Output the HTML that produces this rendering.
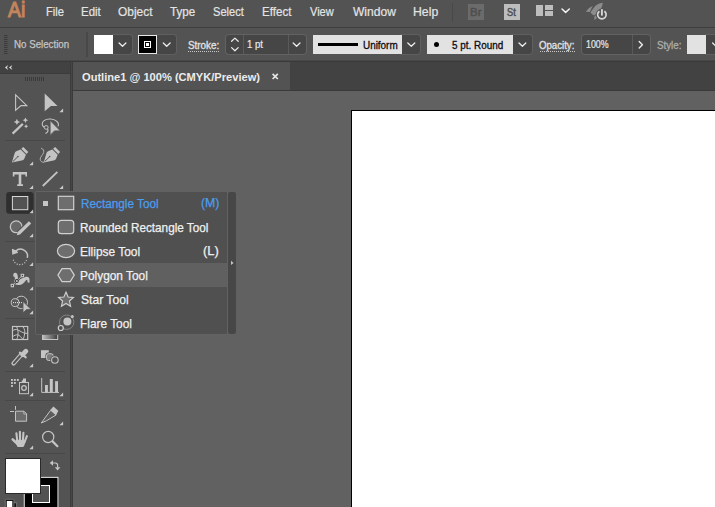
<!DOCTYPE html><html><head><meta charset="utf-8"><title>Ai</title><style>
html,body{margin:0;padding:0;}
body{width:715px;height:507px;overflow:hidden;background:#535353;position:relative;font-family:"Liberation Sans",sans-serif;}
.a{position:absolute;}
.t{position:absolute;white-space:nowrap;transform-origin:0 0;line-height:1;}
svg{position:absolute;overflow:visible;}
</style></head><body>
<div class="a" style="left:0px;top:0px;width:715px;height:27px;background:#535353;"></div>
<div class="a" style="left:0px;top:27px;width:715px;height:1px;background:#3e3e3e;"></div>
<div class="a" style="left:0px;top:28px;width:715px;height:33px;background:#535353;"></div>
<div class="a" style="left:0px;top:60px;width:715px;height:1px;background:#484848;"></div>
<div class="a" style="left:0px;top:61px;width:715px;height:1px;background:#3a3a3a;"></div>
<div class="a" style="left:0px;top:62px;width:70px;height:11px;background:#424242;"></div>
<div class="a" style="left:0px;top:73px;width:70px;height:1px;background:#3c3c3c;"></div>
<div class="a" style="left:0px;top:74px;width:70px;height:433px;background:#535353;"></div>
<div class="a" style="left:70px;top:62px;width:3px;height:445px;background:#3b3b3b;"></div>
<div class="a" style="left:71px;top:62px;width:1px;height:445px;background:#474747;"></div>
<div class="a" style="left:73px;top:62px;width:642px;height:28px;background:#424242;"></div>
<div class="a" style="left:73px;top:62px;width:216.5px;height:28px;background:#535353;"></div>
<div class="a" style="left:73px;top:90px;width:642px;height:1px;background:#3a3a3a;"></div>
<div class="a" style="left:73px;top:91px;width:642px;height:416px;background:#616161;"></div>
<div class="a" style="left:351px;top:110px;width:364px;height:397px;background:#000;"></div>
<div class="a" style="left:352px;top:111px;width:363px;height:396px;background:#fff;"></div>
<div class="a" style="left:451.8px;top:2.5px;width:1.4px;height:19px;background:#484848;"></div>
<div class="a" style="left:468px;top:4px;width:16px;height:16px;background:#6b6b6b;"></div>
<div class="a" style="left:504px;top:4px;width:16px;height:16px;background:#bdbdbd;"></div>
<div class="a" style="left:536px;top:5px;width:7px;height:11px;background:#bdbdbd;"></div>
<div class="a" style="left:545px;top:5px;width:8px;height:5px;background:#bdbdbd;"></div>
<div class="a" style="left:545px;top:11px;width:8px;height:5px;background:#bdbdbd;"></div>
<div class="a" style="left:86.3px;top:32px;width:1.4px;height:25px;background:#484848;"></div>
<div class="a" style="left:113px;top:35px;width:18.5px;height:19px;background:#464646;border-radius:0 3px 3px 0;box-shadow:0 0 0 1px rgba(255,255,255,0.07);"></div>
<div class="a" style="left:94px;top:35px;width:19.2px;height:19px;background:#fff;"></div>
<div class="a" style="left:157px;top:35px;width:18.5px;height:19px;background:#464646;border-radius:0 3px 3px 0;box-shadow:0 0 0 1px rgba(255,255,255,0.07);"></div>
<div class="a" style="left:138px;top:35px;width:19px;height:19px;background:#000;box-shadow:inset 0 0 0 1px #e8e8e8;"></div>
<div class="a" style="left:144px;top:41px;width:7px;height:7px;background:#000;box-shadow:inset 0 0 0 1px #fff;"></div>
<div class="a" style="left:146px;top:43px;width:3px;height:3px;background:#fff;"></div>
<div class="a" style="left:226px;top:35px;width:80px;height:19px;background:#464646;border-radius:3px;box-shadow:0 0 0 1px rgba(255,255,255,0.09);"></div>
<div class="a" style="left:243px;top:35px;width:1px;height:19px;background:#5a5a5a;"></div>
<div class="a" style="left:288px;top:35px;width:1px;height:19px;background:#5a5a5a;"></div>
<div class="a" style="left:401px;top:35px;width:19px;height:19px;background:#464646;border-radius:0 3px 3px 0;box-shadow:0 0 0 1px rgba(255,255,255,0.07);"></div>
<div class="a" style="left:313px;top:35px;width:89px;height:19px;background:#e2e2e2;"></div>
<div class="a" style="left:318px;top:43px;width:40px;height:3px;background:#000;"></div>
<div class="a" style="left:512px;top:35px;width:19.5px;height:19px;background:#464646;border-radius:0 3px 3px 0;box-shadow:0 0 0 1px rgba(255,255,255,0.07);"></div>
<div class="a" style="left:427px;top:35px;width:86px;height:19px;background:#e2e2e2;"></div>
<div class="a" style="left:434px;top:42px;width:5px;height:5px;background:#000;border-radius:50%;"></div>
<div class="a" style="left:582.3px;top:35px;width:67.6px;height:19px;background:#464646;border-radius:3px;box-shadow:0 0 0 1px rgba(255,255,255,0.09);"></div>
<div class="a" style="left:632px;top:35px;width:1px;height:19px;background:#5a5a5a;"></div>
<div class="a" style="left:706px;top:35px;width:12px;height:19px;background:#464646;box-shadow:0 0 0 1px rgba(255,255,255,0.07);"></div>
<div class="a" style="left:687px;top:35px;width:19px;height:19px;background:#e2e2e2;"></div>
<svg width="715" height="507" viewBox="0 0 715 507" style="left:0;top:0">
<path d="M119.10 43.00L122.50 46.30L125.90 43.00" fill="none" stroke="#ececec" stroke-width="1.3" stroke-linecap="round" stroke-linejoin="round"/>
<path d="M163.30 43.00L166.70 46.30L170.10 43.00" fill="none" stroke="#ececec" stroke-width="1.3" stroke-linecap="round" stroke-linejoin="round"/>
<path d="M293.20 43.00L296.60 46.30L300.00 43.00" fill="none" stroke="#ececec" stroke-width="1.3" stroke-linecap="round" stroke-linejoin="round"/>
<path d="M407.80 43.00L411.30 46.30L414.80 43.00" fill="none" stroke="#ececec" stroke-width="1.3" stroke-linecap="round" stroke-linejoin="round"/>
<path d="M519.00 43.00L522.40 46.30L525.80 43.00" fill="none" stroke="#ececec" stroke-width="1.3" stroke-linecap="round" stroke-linejoin="round"/>
<path d="M712.60 43.00L716.00 46.30L719.40 43.00" fill="none" stroke="#ececec" stroke-width="1.3" stroke-linecap="round" stroke-linejoin="round"/>
<path d="M231.60 41.30L234.90 38.10L238.20 41.30" fill="none" stroke="#ececec" stroke-width="1.25" stroke-linecap="round" stroke-linejoin="round"/>
<path d="M231.60 47.60L234.90 50.80L238.20 47.60" fill="none" stroke="#ececec" stroke-width="1.25" stroke-linecap="round" stroke-linejoin="round"/>
<path d="M639.2 41.5L642.4 44.7L639.2 47.9" fill="none" stroke="#ececec" stroke-width="1.4" stroke-linecap="round" stroke-linejoin="round"/>
<path d="M562.00 9.00L565.65 12.40L569.30 9.00" fill="none" stroke="#f2f2f2" stroke-width="1.5" stroke-linecap="round" stroke-linejoin="round"/>
<rect x="4" y="35" width="3.5" height="1" fill="#3a3a3a"/>
<rect x="4" y="37" width="3.5" height="1" fill="#3a3a3a"/>
<rect x="4" y="39" width="3.5" height="1" fill="#3a3a3a"/>
<rect x="4" y="41" width="3.5" height="1" fill="#3a3a3a"/>
<rect x="4" y="43" width="3.5" height="1" fill="#3a3a3a"/>
<rect x="4" y="45" width="3.5" height="1" fill="#3a3a3a"/>
<rect x="4" y="47" width="3.5" height="1" fill="#3a3a3a"/>
<rect x="4" y="49" width="3.5" height="1" fill="#3a3a3a"/>
<rect x="4" y="51" width="3.5" height="1" fill="#3a3a3a"/>
<rect x="4" y="53" width="3.5" height="1" fill="#3a3a3a"/>
<rect x="25" y="77" width="1" height="4" fill="#3a3a3a"/>
<rect x="27" y="77" width="1" height="4" fill="#3a3a3a"/>
<rect x="29" y="77" width="1" height="4" fill="#3a3a3a"/>
<rect x="31" y="77" width="1" height="4" fill="#3a3a3a"/>
<rect x="33" y="77" width="1" height="4" fill="#3a3a3a"/>
<rect x="35" y="77" width="1" height="4" fill="#3a3a3a"/>
<rect x="37" y="77" width="1" height="4" fill="#3a3a3a"/>
<rect x="39" y="77" width="1" height="4" fill="#3a3a3a"/>
<rect x="41" y="77" width="1" height="4" fill="#3a3a3a"/>
<rect x="43" y="77" width="1" height="4" fill="#3a3a3a"/>
<path d="M8.2 65.1L4.9 67.5L8.2 69.9L7 67.5ZM12.3 65.1L9 67.5L12.3 69.9L11.1 67.5Z" fill="#dcdcdc"/>
<path d="M188 51.5H219" stroke="#c8c8c8" stroke-width="1" stroke-dasharray="1 1"/>
<path d="M540 51.5H575" stroke="#c8c8c8" stroke-width="1" stroke-dasharray="1 1"/>
<path d="M272.6 73.8L277.8 79M277.8 73.8L272.6 79" stroke="#e4e4e4" stroke-width="1.7"/>
<path d="M602.8 2.8C599 3.2 596 5 594.4 7C592.6 9.4 591 11.4 590.6 12.4C591.4 13.8 592.8 14.8 594.2 15.2L598 13C600.6 10 602.6 6 602.8 2.8Z" fill="#8c8c8c"/>
<path d="M592.8 5.9C590 6.8 587.4 9.2 585.9 11.8L589.9 12C590.6 10 591.6 7.8 592.8 5.9Z" fill="#8c8c8c"/>
<path d="M594.6 15.8L594.2 20C595.4 19.4 596.4 18.8 597 18L596 15.4Z" fill="#8c8c8c"/>
<circle cx="601.9" cy="14.7" r="6.1" fill="#535353"/>
<path d="M599.46 11.22A4.25 4.25 0 1 0 604.34 11.22" fill="none" stroke="#d6d6d6" stroke-width="1.7"/>
<path d="M601.9 9.2V15.6" stroke="#d6d6d6" stroke-width="1.9"/>
<rect x="5" y="140" width="60" height="1" fill="#484848"/>
<rect x="5" y="241" width="30" height="1" fill="#484848"/>
<rect x="5" y="318" width="30" height="1" fill="#484848"/>
<rect x="5" y="371" width="60" height="1" fill="#484848"/>
<rect x="5" y="400" width="60" height="1" fill="#484848"/>
<rect x="5" y="453" width="60" height="1" fill="#484848"/>
<path d="M15.6 94.8V110.2L21 105.6H26.8Z" fill="none" stroke="#c4c4c4" stroke-width="1.1" stroke-linejoin="miter"/>
<path d="M44.7 93.6V111.2L50.9 105.9H57.5Z" fill="#c4c4c4"/>
<path d="M63.1 108.6V112.3H59.4Z" fill="#cacaca"/>
<path d="M12.6 133.6L22.8 123.9" stroke="#c4c4c4" stroke-width="2.2"/>
<path d="M16.9 118.7L17.9 120.9L20.099999999999998 121.9L17.9 122.9L16.9 125.10000000000001L15.899999999999999 122.9L13.7 121.9L15.899999999999999 120.9Z" fill="#c4c4c4"/>
<path d="M25.4 117.5L26.25 119.35000000000001L28.099999999999998 120.2L26.25 121.05L25.4 122.9L24.549999999999997 121.05L22.7 120.2L24.549999999999997 119.35000000000001Z" fill="#c4c4c4"/>
<path d="M26.1 124.2L26.8 125.6L28.200000000000003 126.3L26.8 127.0L26.1 128.4L25.400000000000002 127.0L24.0 126.3L25.400000000000002 125.6Z" fill="#c4c4c4"/>
<path d="M58 126.4C58.8 124.6 58.4 122.6 56.6 121.2C53.6 118.6 47.4 118.2 44 120.6C41.6 122.4 41.6 125.4 44 127.2" fill="none" stroke="#c4c4c4" stroke-width="1.1"/>
<circle cx="46.2" cy="127.4" r="1.9" fill="none" stroke="#c4c4c4" stroke-width="1"/>
<path d="M47.6 128.8C48.4 130.6 47.6 132.6 45.4 133.6" fill="none" stroke="#c4c4c4" stroke-width="1.1"/>
<path d="M50.1 120.4V135.4L54.5 130.9H60.4Z" fill="#c4c4c4" stroke="#535353" stroke-width="0.9"/>
<g transform="translate(0 0)"><path d="M11.9 162.4L14.4 154C14.8 152.4 15.6 151.6 16.8 151L20.6 149.4L25.9 154.7L24.4 158.4C23.8 159.6 23 160.2 21.6 160.6Z" fill="#c4c4c4"/><path d="M21.3 148.7L23.3 146.9L28.3 151.9L26.5 153.9Z" fill="#c4c4c4"/><path d="M12.8 161.6L17.6 156.9" stroke="#535353" stroke-width="1"/><circle cx="17.9" cy="156.6" r="0.8" fill="#535353"/></g>
<path d="M33.1 161.5V165.2H29.4Z" fill="#cacaca"/>
<g transform="translate(31.8 0)"><path d="M11.9 162.4L14.4 154C14.8 152.4 15.6 151.6 16.8 151L20.6 149.4L25.9 154.7L24.4 158.4C23.8 159.6 23 160.2 21.6 160.6Z" fill="#c4c4c4"/><path d="M21.3 148.7L23.3 146.9L28.3 151.9L26.5 153.9Z" fill="#c4c4c4"/><path d="M12.8 161.6L17.6 156.9" stroke="#535353" stroke-width="1"/><circle cx="17.9" cy="156.6" r="0.8" fill="#535353"/></g>
<path d="M41.1 148.2C43.4 149 44.2 150.6 43.6 152.6C42.8 155.2 40.2 156.6 40.2 159.2C40.2 161.2 41.8 162.4 44.2 162.2" fill="none" stroke="#b4b4b4" stroke-width="1"/>
<path d="M12.8 172H27V176.6H25.4V174.4H21.3V184.2H23V186H17.2V184.2H18.7V174.4H14.4V176.6H12.8Z" fill="#c4c4c4"/>
<path d="M33.1 185.20000000000002V188.9H29.4Z" fill="#cacaca"/>
<path d="M42.8 186L57.4 171.8" stroke="#c4c4c4" stroke-width="1.8"/>
<path d="M63.1 185.20000000000002V188.9H59.4Z" fill="#cacaca"/>
<rect x="6.2" y="192" width="27.4" height="21.8" rx="3" fill="#2f2f2f"/>
<rect x="12.4" y="196.5" width="15.4" height="13.2" fill="#525252" stroke="#d6d6d6" stroke-width="1"/>
<path d="M33.1 209.5V213.2H29.4Z" fill="#cacaca"/>
<circle cx="16.2" cy="226.8" r="5.9" fill="#686868" stroke="#c4c4c4" stroke-width="1.3"/>
<path d="M30 222.4L18.6 233.4" stroke="#535353" stroke-width="5.6"/>
<path d="M28.9 221.2L31.2 223.6L20 234.4L16.8 235.2L17.7 232Z" fill="#c4c4c4"/>
<path d="M33.1 233.5V237.2H29.4Z" fill="#cacaca"/>
<path d="M15.6 251.2A7 7 0 0 1 27.3 257.8" fill="none" stroke="#c4c4c4" stroke-width="1.5"/>
<path d="M26.5 260.1A7 7 0 0 1 13 258.6" fill="none" stroke="#c4c4c4" stroke-width="1.2" stroke-dasharray="1.1 1.55"/>
<path d="M11.9 248.8L12.2 254.8L18.2 252.8L16.6 250.4Z" fill="#c4c4c4"/>
<path d="M33.1 262.3V266H29.4Z" fill="#cacaca"/>
<path d="M13.4 276.4C12.8 274.4 13.8 272.8 15.2 272.8C16.8 272.8 17.6 274.4 17.8 276.4C18 278 18.2 279 18.8 279.6C20.5 279.2 23.5 277.4 26 276.8C28 276.4 29.4 277.4 29.5 279.4L29.5 282.8L27.6 282.4C27.6 281 27.4 280 26.6 279.8C25.4 280.8 23.6 283.6 21.6 284.4C19.8 285 17.6 285 16.2 284.8C14.6 284.4 13.8 283.4 14.2 281.8C14.6 280.2 15.2 278.8 14.8 277.6C14.6 276.8 14 276.4 13.4 276.4Z" fill="#c4c4c4"/>
<path d="M12.4 285.5L22.4 275.5" stroke="#535353" stroke-width="2"/>
<path d="M12.4 285.5L22.4 275.5" stroke="#c4c4c4" stroke-width="0.8"/>
<rect x="10.700000000000001" y="283.8" width="3.4" height="3.4" rx="0.5" fill="#c4c4c4"/><rect x="11.8" y="284.9" width="1.2" height="1.2" fill="#3c3c3c"/>
<rect x="20.7" y="273.8" width="3.4" height="3.4" rx="0.5" fill="#c4c4c4"/><rect x="21.799999999999997" y="274.9" width="1.2" height="1.2" fill="#3c3c3c"/>
<circle cx="16.8" cy="280.9" r="2" fill="#3c3c3c"/><circle cx="16.8" cy="280.9" r="1" fill="#c4c4c4"/>
<path d="M33.1 286.5V290.2H29.4Z" fill="#cacaca"/>
<circle cx="21.3" cy="302.4" r="6.2" fill="none" stroke="#c4c4c4" stroke-width="1"/>
<circle cx="15.2" cy="302.6" r="4" fill="#5c5c5c" stroke="#c4c4c4" stroke-width="1"/>
<path d="M13 302.6H22.6" stroke="#e8e8e8" stroke-width="1" stroke-dasharray="1 1"/>
<path d="M23 301.4V312.8L26.6 309.6H31.2Z" fill="#c4c4c4" stroke="#535353" stroke-width="0.8"/>
<path d="M33.1 310.5V314.2H29.4Z" fill="#cacaca"/>
<rect x="12.5" y="326.5" width="15.2" height="13" fill="#4c4c4c" stroke="#c4c4c4" stroke-width="1.2"/>
<path d="M16.6 326.5C17.6 329 18.4 332 18 334.5C17.8 336.5 17.2 338.5 16.8 339.5M23 326.5C24.6 329 25 331.5 24.7 333.3C24.4 336 23.8 338 23 339.5M12.5 330.8C14 329.6 16 329.2 17.6 329.8C20 331 22.5 332.6 24.7 333.3H27.7M12.5 337C14 335.4 16 334.6 17.8 334.8C19.6 335.4 21.4 337.4 22.6 339" fill="none" stroke="#c4c4c4" stroke-width="1"/>
<defs><linearGradient id="gr" x1="0" x2="1" y1="0" y2="0"><stop offset="0" stop-color="#bdbdbd"/><stop offset="1" stop-color="#3c3c3c"/></linearGradient></defs>
<rect x="42.5" y="326.5" width="15.2" height="13" fill="url(#gr)" stroke="#c4c4c4" stroke-width="1"/>
<path d="M20.6 355.4L13.6 363.4" stroke="#c4c4c4" stroke-width="4.4" stroke-linecap="round"/>
<path d="M20.8 355.2L13.9 363.1" stroke="#535353" stroke-width="2.1" stroke-linecap="round"/>
<path d="M19.9 352.7L25.6 357.2" stroke="#c4c4c4" stroke-width="2.3" stroke-linecap="round"/>
<path d="M22.6 354.6L25.9 351.2" stroke="#c4c4c4" stroke-width="4.8" stroke-linecap="round"/>
<path d="M33.1 363.5V367.2H29.4Z" fill="#cacaca"/>
<rect x="41" y="350.2" width="7.8" height="7.8" fill="#c4c4c4"/>
<rect x="45.4" y="352.6" width="9" height="9" rx="3" fill="#535353"/>
<rect x="46.5" y="353.7" width="6.8" height="6.8" rx="2.2" fill="#7c7c7c" stroke="#c4c4c4" stroke-width="1"/>
<circle cx="54.9" cy="360" r="4.7" fill="#535353"/>
<circle cx="54.9" cy="360" r="3.3" fill="#535353" stroke="#c4c4c4" stroke-width="1.1"/>
<rect x="11" y="379" width="1.9" height="1.9" fill="#c4c4c4"/>
<rect x="13.9" y="379" width="1.9" height="1.9" fill="#c4c4c4"/>
<rect x="16.9" y="379" width="1.9" height="1.9" fill="#c4c4c4"/>
<rect x="11" y="382" width="1.9" height="1.9" fill="#c4c4c4"/>
<rect x="13.9" y="382" width="1.9" height="1.9" fill="#c4c4c4"/>
<rect x="11" y="385" width="1.9" height="1.9" fill="#c4c4c4"/>
<rect x="19.5" y="382.5" width="9" height="11.2" fill="#535353" stroke="#c4c4c4" stroke-width="1"/>
<path d="M21.8 382V380.2H23V378.4H26V382Z" fill="#c4c4c4"/>
<circle cx="24" cy="388" r="2.3" fill="none" stroke="#c4c4c4" stroke-width="1.3"/>
<path d="M33.1 392.5V396.2H29.4Z" fill="#cacaca"/>
<path d="M41.7 378V392.4H59" fill="none" stroke="#c4c4c4" stroke-width="1"/>
<rect x="45" y="385" width="2.9" height="7.4" fill="#c4c4c4"/><rect x="49.8" y="379" width="3" height="13.4" fill="#c4c4c4"/><rect x="55.1" y="381.2" width="2.9" height="11.2" fill="#c4c4c4"/>
<path d="M63.1 392.5V396.2H59.4Z" fill="#cacaca"/>
<path d="M15.5 406V409.8M10 411.5H14" stroke="#c4c4c4" stroke-width="1"/>
<path d="M15.5 411.2H24L26.6 413.8V421.2H15.5Z" fill="#6c6c6c" stroke="#c4c4c4" stroke-width="1"/>
<path d="M23.8 411.4V414H26.4" fill="none" stroke="#c4c4c4" stroke-width="0.8"/>
<path d="M41.2 423L50.7 410.2L56 415L46.4 420.8Z" fill="#5c5c5c" stroke="#c4c4c4" stroke-width="1" stroke-linejoin="round"/>
<path d="M50.3 409.9L53.4 406.5L58.3 410.8L56.2 415.3Z" fill="#c4c4c4"/>
<path d="M63.1 421.5V425.2H59.4Z" fill="#cacaca"/>
<path d="M16.4 433.4L17.3 441M19.9 431.8L20.1 441M23.4 432.8L22.9 441M26.9 436.2L24.4 442.4" stroke="#c4c4c4" stroke-width="2.1" stroke-linecap="round" fill="none"/>
<path d="M12.7 439.3L17.6 444.2" stroke="#c4c4c4" stroke-width="2.5" stroke-linecap="round"/>
<path d="M15.8 439.6L25.6 440.4C25.2 443.4 24.4 445.6 23.2 447H17.6C16.4 445 15.4 442.4 15.8 439.6Z" fill="#c4c4c4"/>
<path d="M33.1 445.5V449.2H29.4Z" fill="#cacaca"/>
<circle cx="48.2" cy="437" r="5.6" fill="none" stroke="#c4c4c4" stroke-width="1.2"/>
<path d="M52.6 441.4L57.4 446.2" stroke="#c4c4c4" stroke-width="2.2" stroke-linecap="round"/>
<rect x="23.7" y="476.8" width="34.8" height="34" fill="#000"/>
<rect x="24.2" y="477.3" width="33.8" height="33" fill="none" stroke="#fff" stroke-width="1"/>
<rect x="32.5" y="485.5" width="17" height="17" fill="#535353" stroke="#fff" stroke-width="1"/>
<rect x="5.5" y="458.5" width="35" height="35" fill="#fff" stroke="#2a2a2a" stroke-width="1"/>
<path d="M52.4 463H55.4C57 463 57.6 463.8 57.6 465.2V467.4" fill="none" stroke="#c4c4c4" stroke-width="1.2"/>
<path d="M49.8 463L53 460.2V465.8Z" fill="#c4c4c4"/><path d="M57.6 470.4L54.8 467.2H60.4Z" fill="#c4c4c4"/>
<path d="M13.4 502.8H16.6V508" fill="none" stroke="#7c7c7c" stroke-width="1"/>
<rect x="13" y="503.3" width="3.1" height="5" fill="#111"/>
<rect x="5.3" y="499.3" width="8.6" height="9" rx="1" fill="#111" stroke="#7c7c7c" stroke-width="0.9"/>
<rect x="6.8" y="501" width="5.5" height="6.5" fill="#fff"/>
</svg>
<div class="a" style="left:35px;top:191px;width:201px;height:143.5px;background:#626262;border-radius:2px;"></div>
<div class="a" style="left:36px;top:192px;width:191px;height:141.5px;background:#505050;"></div>
<div class="a" style="left:36px;top:263px;width:191px;height:24px;background:#606060;"></div>
<div class="a" style="left:228.2px;top:192px;width:7.5px;height:141.5px;background:#474747;border-radius:2px;"></div>
<div class="a" style="left:43px;top:201px;width:5.3px;height:5.3px;background:#c6c6c6;"></div>
<span class="t" style="left:46.37px;top:6px;font-size:12.7px;color:#e4e4e4;transform:scaleX(0.8819);-webkit-text-stroke:0.2px;">File</span>
<span class="t" style="left:80.54px;top:6px;font-size:12.7px;color:#e4e4e4;transform:scaleX(0.9027);-webkit-text-stroke:0.2px;">Edit</span>
<span class="t" style="left:118.09px;top:6px;font-size:12.7px;color:#e4e4e4;transform:scaleX(0.9399);-webkit-text-stroke:0.2px;">Object</span>
<span class="t" style="left:170.39px;top:6px;font-size:12.7px;color:#e4e4e4;transform:scaleX(0.9158);-webkit-text-stroke:0.2px;">Type</span>
<span class="t" style="left:213.01px;top:6px;font-size:12.7px;color:#e4e4e4;transform:scaleX(0.8729);-webkit-text-stroke:0.2px;">Select</span>
<span class="t" style="left:261.88px;top:6px;font-size:12.7px;color:#e4e4e4;transform:scaleX(0.9155);-webkit-text-stroke:0.2px;">Effect</span>
<span class="t" style="left:309.91px;top:6px;font-size:12.7px;color:#e4e4e4;transform:scaleX(0.8700);-webkit-text-stroke:0.2px;">View</span>
<span class="t" style="left:352.96px;top:6px;font-size:12.7px;color:#e4e4e4;transform:scaleX(0.9492);-webkit-text-stroke:0.2px;">Window</span>
<span class="t" style="left:413.01px;top:6px;font-size:12.7px;color:#e4e4e4;transform:scaleX(0.9653);-webkit-text-stroke:0.2px;">Help</span>
<span class="t" style="left:8.00px;top:-0.1px;font-size:21.5px;color:#c3855c;transform:scaleX(0.8986);-webkit-text-stroke:1.1px;">Ai</span>
<span class="t" style="left:469.72px;top:6.9px;font-size:11px;color:#4e4e4e;transform:scaleX(1.0443);-webkit-text-stroke:0.5px;">Br</span>
<span class="t" style="left:507.33px;top:6.9px;font-size:11px;color:#505050;transform:scaleX(0.8442);-webkit-text-stroke:0.5px;">St</span>
<span class="t" style="left:14.25px;top:40.2px;font-size:10.1px;color:#c4c4c4;transform:scaleX(0.9639);-webkit-text-stroke:0.25px;">No Selection</span>
<span class="t" style="left:188.49px;top:41.3px;font-size:10.2px;color:#e4e4e4;transform:scaleX(0.9678);-webkit-text-stroke:0.3px;">Stroke:</span>
<span class="t" style="left:247.45px;top:40.0px;font-size:10.3px;color:#e8e8e8;transform:scaleX(0.9320);-webkit-text-stroke:0.2px;">1 pt</span>
<span class="t" style="left:362.71px;top:41.3px;font-size:10.2px;color:#0c0c14;transform:scaleX(0.9722);-webkit-text-stroke:0.3px;">Uniform</span>
<span class="t" style="left:451.91px;top:41.3px;font-size:10.2px;color:#0c0c14;transform:scaleX(0.9706);-webkit-text-stroke:0.3px;">5 pt. Round</span>
<span class="t" style="left:539.48px;top:41.3px;font-size:10.2px;color:#e4e4e4;transform:scaleX(0.9458);-webkit-text-stroke:0.3px;">Opacity:</span>
<span class="t" style="left:586.35px;top:40.0px;font-size:10.3px;color:#e8e8e8;transform:scaleX(0.8587);-webkit-text-stroke:0.2px;">100%</span>
<span class="t" style="left:656.87px;top:41.3px;font-size:10.2px;color:#adadad;transform:scaleX(0.9569);-webkit-text-stroke:0.3px;">Style:</span>
<span class="t" style="left:82.00px;top:72px;font-size:11.2px;color:#ececec;font-weight:bold;transform:scaleX(0.9923);">Outline1 @ 100% (CMYK/Preview)</span>
<span class="t" style="left:80.76px;top:197.6px;font-size:12.8px;color:#4b9df0;transform:scaleX(0.9193);-webkit-text-stroke:0.25px;">Rectangle Tool</span>
<span class="t" style="left:80.41px;top:221.6px;font-size:12.8px;color:#f0f0f0;transform:scaleX(0.9177);-webkit-text-stroke:0.25px;">Rounded Rectangle Tool</span>
<span class="t" style="left:80.41px;top:245.6px;font-size:12.8px;color:#f0f0f0;transform:scaleX(0.9316);-webkit-text-stroke:0.25px;">Ellipse Tool</span>
<span class="t" style="left:80.40px;top:269.6px;font-size:12.8px;color:#f0f0f0;transform:scaleX(0.9292);-webkit-text-stroke:0.25px;">Polygon Tool</span>
<span class="t" style="left:80.61px;top:293.6px;font-size:12.8px;color:#f0f0f0;transform:scaleX(0.9469);-webkit-text-stroke:0.25px;">Star Tool</span>
<span class="t" style="left:80.41px;top:317.6px;font-size:12.8px;color:#f0f0f0;transform:scaleX(0.9276);-webkit-text-stroke:0.25px;">Flare Tool</span>
<span class="t" style="left:200.85px;top:197.3px;font-size:12.8px;color:#4b9df0;transform:scaleX(0.9593);-webkit-text-stroke:0.25px;">(M)</span>
<span class="t" style="left:203.40px;top:245.3px;font-size:12.8px;color:#f0f0f0;transform:scaleX(1.0086);-webkit-text-stroke:0.25px;">(L)</span>
<svg width="715" height="507" viewBox="0 0 715 507" style="left:0;top:0">
<path d="M231 260.8L233.6 262.9L231 265Z" fill="#c4c4c4"/>
<rect x="58.3" y="196.3" width="15.4" height="13.4" fill="#6e6e6e" stroke="#d0d0d0" stroke-width="1.2"/>
<rect x="58.3" y="220.3" width="15.4" height="13.4" rx="3" fill="#6e6e6e" stroke="#d0d0d0" stroke-width="1.2"/>
<ellipse cx="66" cy="251" rx="8.6" ry="6.6" fill="#6e6e6e" stroke="#d0d0d0" stroke-width="1.2"/>
<path d="M57.9 275.1L62 268.6H70.2L74.3 275.1L70.2 281.6H62Z" fill="#6e6e6e" stroke="#d0d0d0" stroke-width="1.2"/>
<path d="M66.00 292.10L68.12 296.99L73.42 297.49L69.42 301.01L70.58 306.21L66.00 303.50L61.42 306.21L62.58 301.01L58.58 297.49L63.88 296.99Z" fill="#6e6e6e" stroke="#d0d0d0" stroke-width="1.15" stroke-linejoin="miter"/>
<circle cx="66.7" cy="322.2" r="7.2" fill="none" stroke="#8a8a8a" stroke-width="0.9"/>
<circle cx="67.4" cy="321.4" r="4" fill="#c4c4c4"/>
<circle cx="72.3" cy="316.5" r="1.5" fill="#c4c4c4"/>
<circle cx="60.8" cy="328" r="2.5" fill="#505050" stroke="#d0d0d0" stroke-width="1.2"/>
</svg>
</body></html>
